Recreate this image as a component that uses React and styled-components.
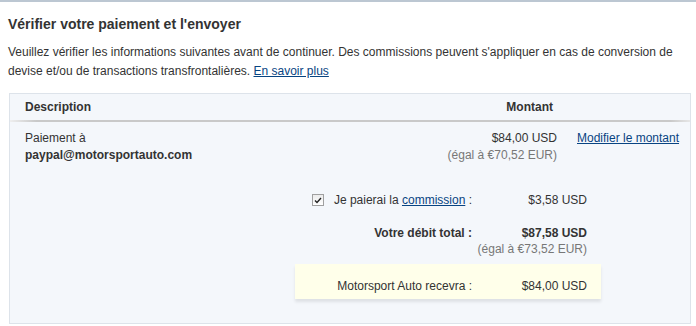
import styled, { createGlobalStyle } from "styled-components";

const GlobalStyle = createGlobalStyle`
  body {
    margin: 0;
    background: #fff;
    font-family: "Liberation Sans", Arial, sans-serif;
    color: #333;
  }
`;

const Page = styled.div`
  border-top: 2px solid #bcc7d2;
  padding: 13px 5px 0 8px;
`;

const Title = styled.h2`
  margin: 0 0 10px;
  font-size: 14px;
  line-height: 18px;
  font-weight: bold;
  color: #333;
`;

const Intro = styled.p`
  margin: 0 0 12px;
  font-size: 12px;
  line-height: 19px;
`;

const Link = styled.a`
  color: #084482;
  text-decoration: underline;
  cursor: pointer;
`;

const Panel = styled.div`
  margin-left: 1px;
  border: 1px solid #dde3ea;
  background: #f4f7fb;
  padding-bottom: 24px;
  font-size: 12px;
`;

const Grid = styled.div`
  display: grid;
  grid-template-columns: 1fr 150px 103px;
  column-gap: 20px;
  padding: 0 10px 0 15px;
`;

const HeadRow = styled(Grid)`
  height: 26px;
  align-items: center;
  font-weight: bold;
  border-bottom: 2px solid transparent;
  border-image: linear-gradient(to right, #f0f0f0, #c9c9c9 4%, #c9c9c9 97%, #e8e8e8) 1;
`;

const Cell = styled.div`
  text-align: ${(p) => (p.$right ? "right" : "left")};
  padding-right: ${(p) => p.$pad || 0}px;
  line-height: 17px;
  white-space: nowrap;
`;

const BodyRow = styled(Grid)`
  padding-top: 8px;
  min-height: 50px;
`;

const Strong = styled.div`
  font-weight: bold;
`;

const Muted = styled.div`
  color: #777;
`;

const Summary = styled.div`
  width: 306px;
  margin-left: 285px;
  margin-top: 12px;
`;

const SumRow = styled.div`
  display: grid;
  grid-template-columns: 1fr 115px;
  padding-right: 14px;
  margin-bottom: ${(p) => p.$gap || 0}px;
  font-weight: ${(p) => (p.$bold ? "bold" : "normal")};
  line-height: 16px;
  white-space: nowrap;
`;

const Label = styled.div`
  display: flex;
  justify-content: flex-end;
  align-items: center;
`;

const Amount = styled.div`
  text-align: right;
`;

const Check = styled.span`
  display: inline-flex;
  align-items: center;
  justify-content: center;
  width: 12px;
  height: 12px;
  box-sizing: border-box;
  border: 1px solid #a0a0a0;
  background: linear-gradient(#ececec, #fff);
  margin-right: 10px;
`;

const Receive = styled.div`
  background: #ffffea;
  box-shadow: 0 3px 3px rgba(0, 0, 0, 0.09);
  padding: 14px 0 5px;
`;

export default function App() {
  return (
    <>
      <GlobalStyle />
      <Page>
        <Title>Vérifier votre paiement et l'envoyer</Title>
        <Intro>
          Veuillez vérifier les informations suivantes avant de continuer. Des commissions peuvent s'appliquer en cas de conversion de devise et/ou de transactions transfrontalières.{" "}
          <Link>En savoir plus</Link>
        </Intro>
        <Panel>
          <HeadRow>
            <Cell>Description</Cell>
            <Cell $right $pad={4}>Montant</Cell>
            <Cell />
          </HeadRow>
          <BodyRow>
            <Cell>
              <div>Paiement à</div>
              <Strong>paypal@motorsportauto.com</Strong>
            </Cell>
            <Cell $right>
              <div>$84,00 USD</div>
              <Muted>(égal à €70,52 EUR)</Muted>
            </Cell>
            <Cell>
              <Link>Modifier le montant</Link>
            </Cell>
          </BodyRow>
          <Summary>
            <SumRow $gap={17}>
              <Label>
                <Check>
                  <svg width="8" height="7" viewBox="0 0 8 7">
                    <path d="M1 3.5 L3 5.5 L7 1" fill="none" stroke="#222" strokeWidth="1.4" />
                  </svg>
                </Check>
                <span>
                  Je paierai la <Link>commission</Link> :
                </span>
              </Label>
              <Amount>$3,58 USD</Amount>
            </SumRow>
            <SumRow $bold>
              <Label>Votre débit total :</Label>
              <Amount>$87,58 USD</Amount>
            </SumRow>
            <SumRow $gap={7}>
              <Label />
              <Amount>
                <Muted>(égal à €73,52 EUR)</Muted>
              </Amount>
            </SumRow>
            <Receive>
              <SumRow>
                <Label>Motorsport Auto recevra :</Label>
                <Amount>$84,00 USD</Amount>
              </SumRow>
            </Receive>
          </Summary>
        </Panel>
      </Page>
    </>
  );
}
